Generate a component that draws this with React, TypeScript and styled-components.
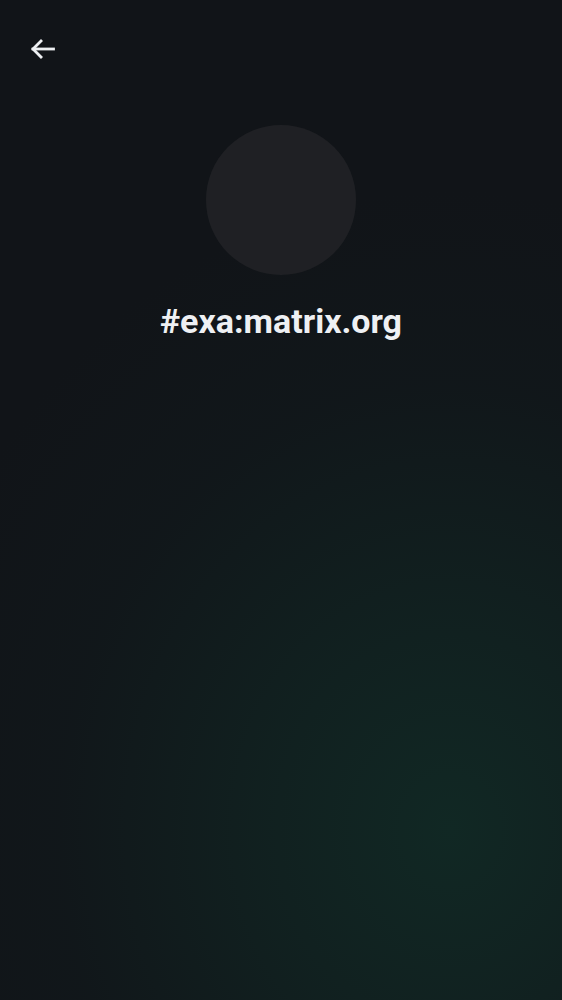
import React from "react";
import styled, { createGlobalStyle } from "styled-components";

const Global = createGlobalStyle`
  html, body { margin: 0; padding: 0; background: #111418; }
  * { box-sizing: border-box; }
`;

const Screen = styled.div`
  width: 562px;
  height: 1000px;
  overflow: hidden;
  background:
    radial-gradient(ellipse 560px 640px at 450px 830px, rgba(17, 40, 36, 1) 0%, rgba(17, 36, 34, 0.75) 35%, rgba(17, 28, 30, 0.35) 70%, rgba(17, 20, 24, 0) 100%),
    #111418;
  font-family: Roboto, "Noto Sans", sans-serif;
  display: flex;
  flex-direction: column;
`;

const TopBar = styled.header`
  height: 100px;
  padding: 26px 0 0 20px;
  display: flex;
  align-items: flex-start;
`;

const BackButton = styled.button`
  width: 46px;
  height: 46px;
  border: none;
  background: transparent;
  padding: 0;
  display: flex;
  align-items: center;
  justify-content: center;
  color: #eef0f3;
  cursor: pointer;
`;

const Profile = styled.section`
  display: flex;
  flex-direction: column;
  align-items: center;
  margin-top: 25px;
`;

const Avatar = styled.div`
  width: 150px;
  height: 150px;
  border-radius: 50%;
  background: #1f2024;
`;

const RoomName = styled.h1`
  margin: 26px 0 0;
  font-size: 34px;
  line-height: 40px;
  font-weight: 700;
  color: #eef0f3;
  letter-spacing: 0;
`;

export default function App() {
  return (
    <>
      <Global />
      <Screen>
        <TopBar>
          <BackButton aria-label="Back">
            <svg width="26" height="24" viewBox="0 0 26 24" fill="none" stroke="currentColor" strokeWidth="2.8" strokeLinecap="square" strokeLinejoin="miter">
              <path d="M3 12H23.5" />
              <path d="M11 4 3 12 11 20" />
            </svg>
          </BackButton>
        </TopBar>
        <Profile>
          <Avatar />
          <RoomName>#exa:matrix.org</RoomName>
        </Profile>
      </Screen>
    </>
  );
}
